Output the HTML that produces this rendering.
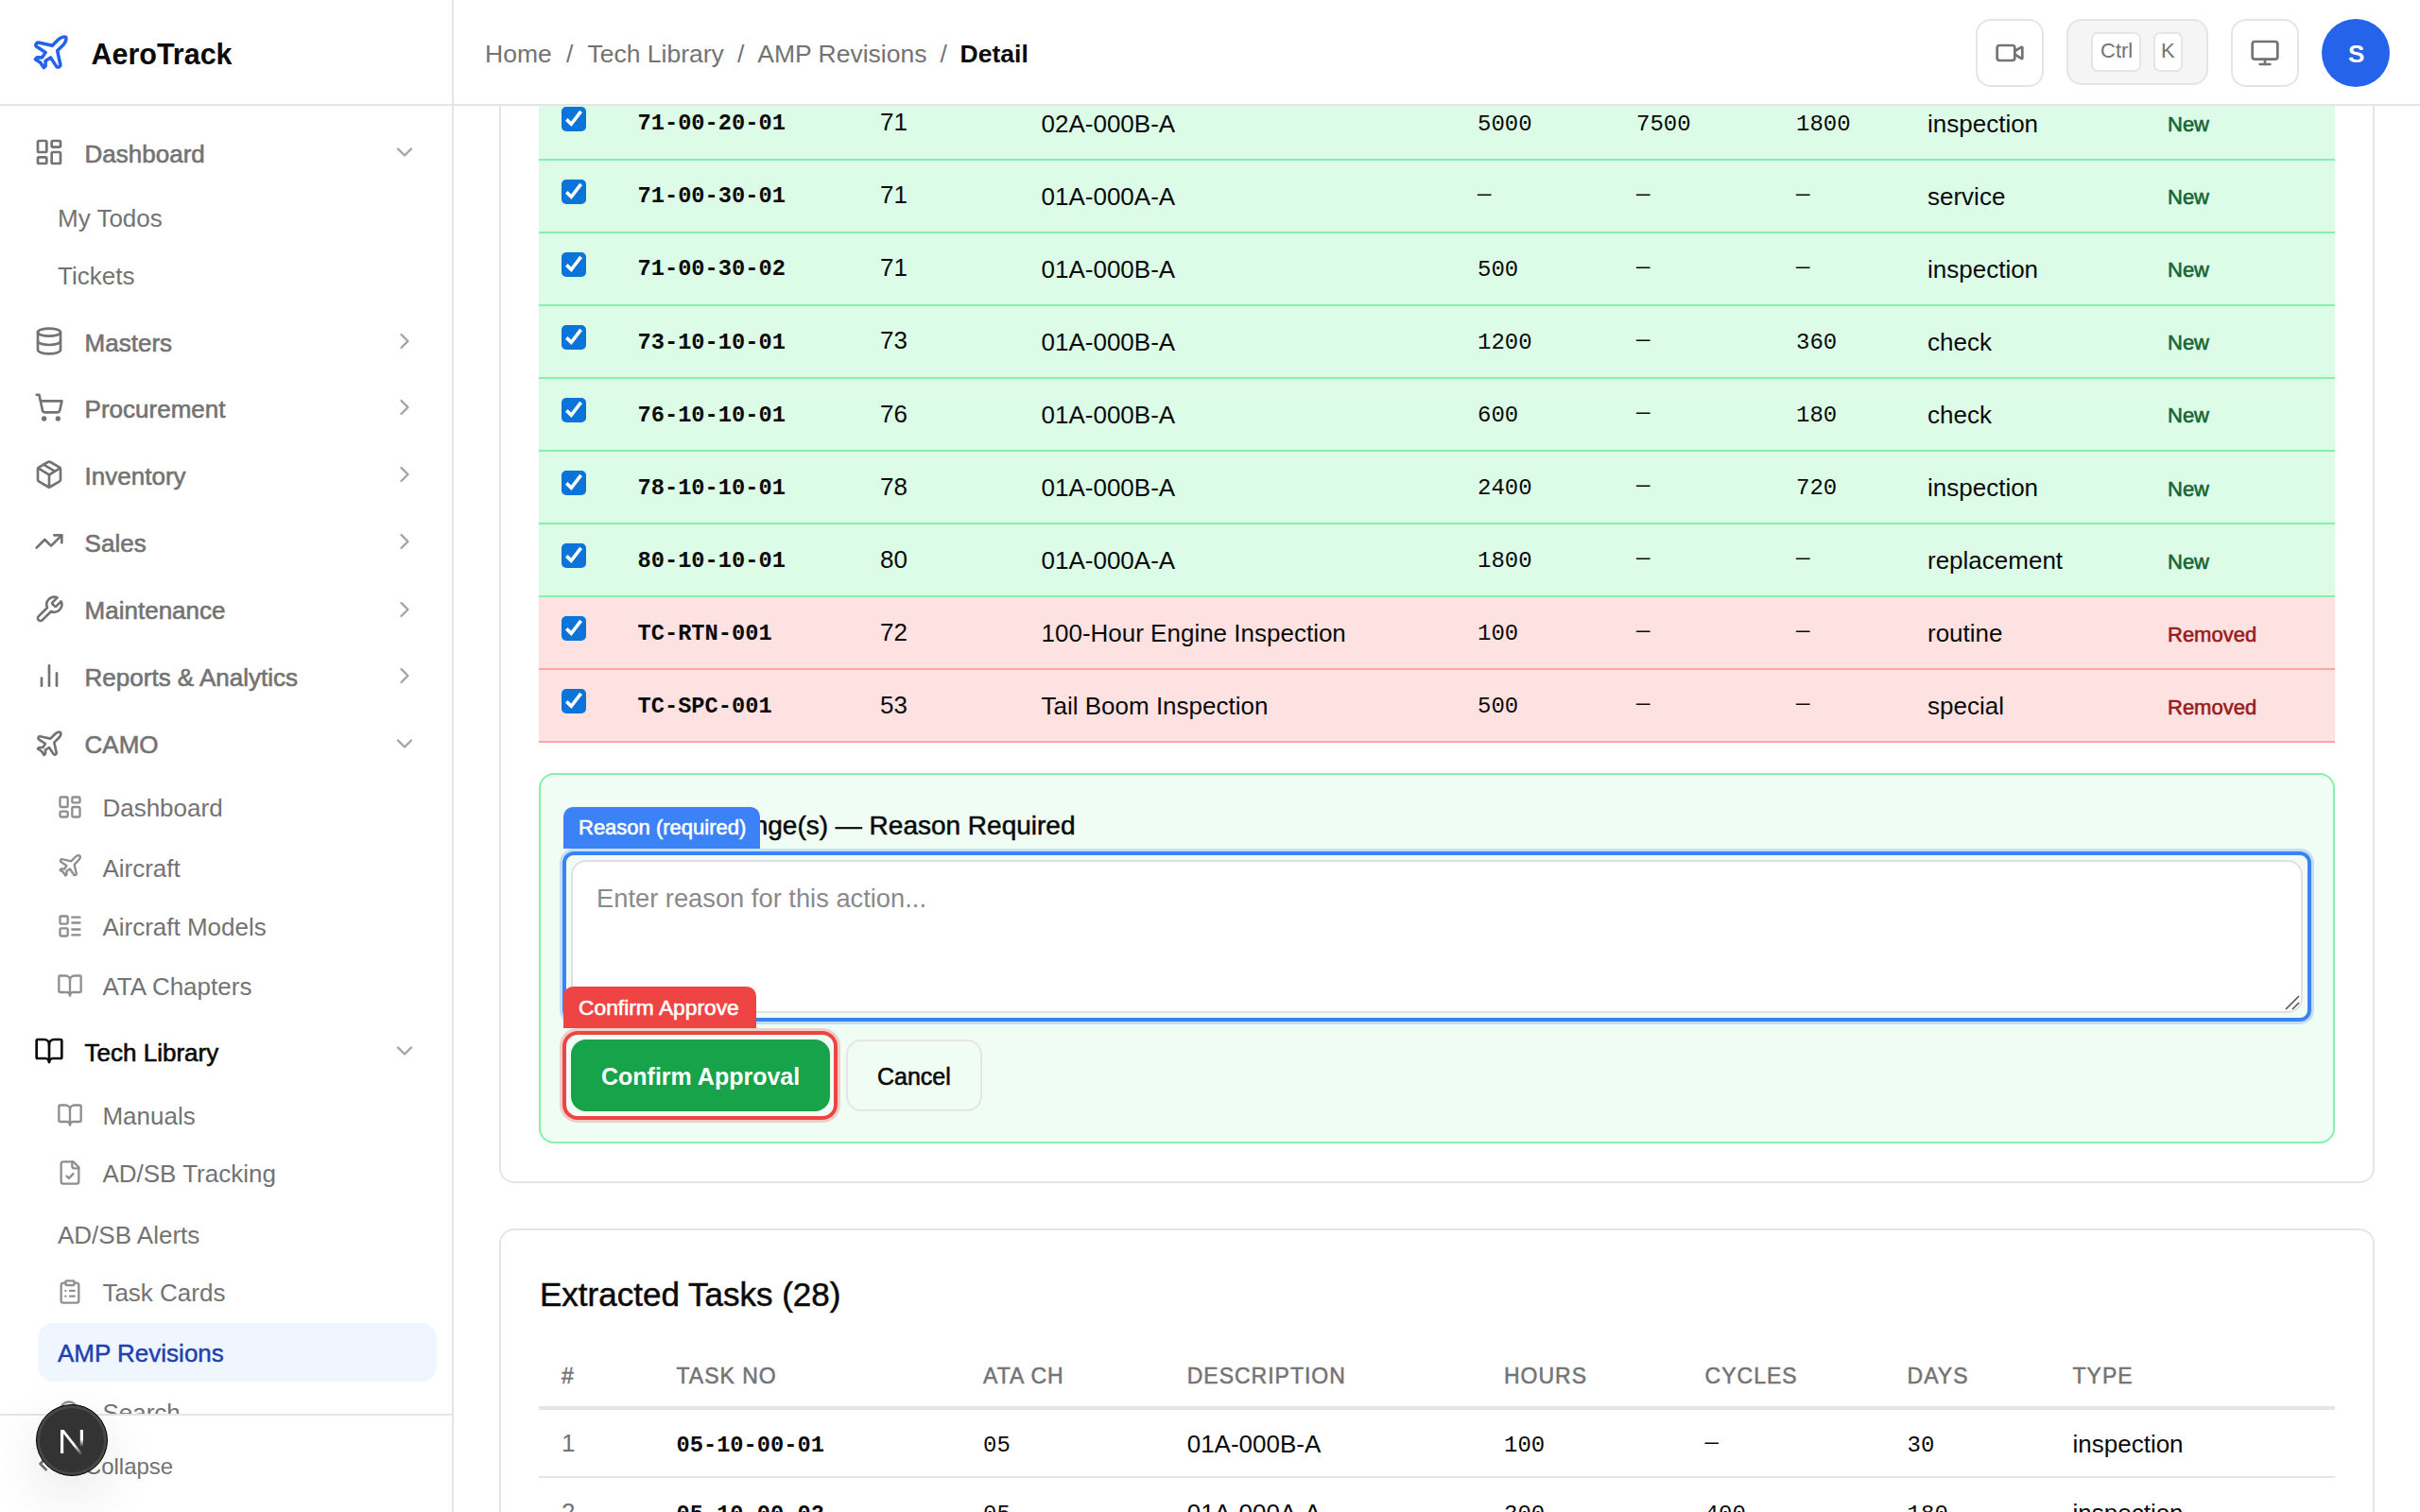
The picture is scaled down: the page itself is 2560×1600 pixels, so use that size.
<!DOCTYPE html>
<html><head><meta charset="utf-8"><title>AeroTrack</title>
<style>
html,body{margin:0;padding:0;}
body{width:2560px;height:1600px;overflow:hidden;position:relative;background:#fff;font-family:"Liberation Sans",sans-serif;}
.t{position:absolute;white-space:nowrap;line-height:1;}
.ic{position:absolute;}
.abs{position:absolute;box-sizing:border-box;}
@media (max-width:1400px){html{zoom:0.5;}}
</style></head><body>

<div class="abs" style="left:528px;top:-200px;width:1984px;height:1452px;border:2px solid #e5e5e5;border-radius:16px;background:#fff"></div>
<div class="abs" style="left:570px;top:92.7px;width:1900px;height:77.1px;background:#dcfce7;border-bottom:2px solid #86efac"></div>
<div class="abs" style="left:594px;top:112.7px;width:26px;height:26px;background:#0b74d8;border-radius:5px"></div>
<svg class="ic" style="left:594px;top:112.7px" width="26" height="26" viewBox="0 0 26 26"><polyline points="5.3,13.4 10.3,18.3 20.6,4.9" fill="none" stroke="#fff" stroke-width="3.6"/></svg>
<div class="t" style="left:674.5px;top:119.2px;font-size:23.7px;color:#0a0a0a;font-weight:700;font-family:'Liberation Mono', monospace;">71-00-20-01</div>
<div class="t" style="left:931.0px;top:116.1px;font-size:26px;color:#0a0a0a;font-weight:400;font-family:'Liberation Sans', sans-serif;">71</div>
<div class="t" style="left:1101.5px;top:117.6px;font-size:26px;color:#0a0a0a;font-weight:400;font-family:'Liberation Sans', sans-serif;">02A-000B-A</div>
<div class="t" style="left:1563.0px;top:119.7px;font-size:24px;color:#0a0a0a;font-weight:400;font-family:'Liberation Mono', monospace;">5000</div>
<div class="t" style="left:1731.0px;top:119.7px;font-size:24px;color:#0a0a0a;font-weight:400;font-family:'Liberation Mono', monospace;">7500</div>
<div class="t" style="left:1900.0px;top:119.7px;font-size:24px;color:#0a0a0a;font-weight:400;font-family:'Liberation Mono', monospace;">1800</div>
<div class="t" style="left:2039.0px;top:117.6px;font-size:26px;color:#0a0a0a;font-weight:400;font-family:'Liberation Sans', sans-serif;">inspection</div>
<div class="t" style="left:2293.0px;top:121.0px;font-size:22px;color:#166534;font-weight:400;font-family:'Liberation Sans', sans-serif;-webkit-text-stroke:0.6px #166534">New</div>
<div class="abs" style="left:570px;top:169.8px;width:1900px;height:77.1px;background:#dcfce7;border-bottom:2px solid #86efac"></div>
<div class="abs" style="left:594px;top:189.8px;width:26px;height:26px;background:#0b74d8;border-radius:5px"></div>
<svg class="ic" style="left:594px;top:189.8px" width="26" height="26" viewBox="0 0 26 26"><polyline points="5.3,13.4 10.3,18.3 20.6,4.9" fill="none" stroke="#fff" stroke-width="3.6"/></svg>
<div class="t" style="left:674.5px;top:196.3px;font-size:23.7px;color:#0a0a0a;font-weight:700;font-family:'Liberation Mono', monospace;">71-00-30-01</div>
<div class="t" style="left:931.0px;top:193.2px;font-size:26px;color:#0a0a0a;font-weight:400;font-family:'Liberation Sans', sans-serif;">71</div>
<div class="t" style="left:1101.5px;top:194.7px;font-size:26px;color:#0a0a0a;font-weight:400;font-family:'Liberation Sans', sans-serif;">01A-000A-A</div>
<div class="t" style="left:1563.0px;top:196.8px;font-size:24px;color:#0a0a0a;font-weight:400;font-family:'Liberation Mono', monospace;"><span style="position:relative;top:-3px">—</span></div>
<div class="t" style="left:1731.0px;top:196.8px;font-size:24px;color:#0a0a0a;font-weight:400;font-family:'Liberation Mono', monospace;"><span style="position:relative;top:-3px">—</span></div>
<div class="t" style="left:1900.0px;top:196.8px;font-size:24px;color:#0a0a0a;font-weight:400;font-family:'Liberation Mono', monospace;"><span style="position:relative;top:-3px">—</span></div>
<div class="t" style="left:2039.0px;top:194.7px;font-size:26px;color:#0a0a0a;font-weight:400;font-family:'Liberation Sans', sans-serif;">service</div>
<div class="t" style="left:2293.0px;top:198.1px;font-size:22px;color:#166534;font-weight:400;font-family:'Liberation Sans', sans-serif;-webkit-text-stroke:0.6px #166534">New</div>
<div class="abs" style="left:570px;top:246.9px;width:1900px;height:77.1px;background:#dcfce7;border-bottom:2px solid #86efac"></div>
<div class="abs" style="left:594px;top:266.9px;width:26px;height:26px;background:#0b74d8;border-radius:5px"></div>
<svg class="ic" style="left:594px;top:266.9px" width="26" height="26" viewBox="0 0 26 26"><polyline points="5.3,13.4 10.3,18.3 20.6,4.9" fill="none" stroke="#fff" stroke-width="3.6"/></svg>
<div class="t" style="left:674.5px;top:273.4px;font-size:23.7px;color:#0a0a0a;font-weight:700;font-family:'Liberation Mono', monospace;">71-00-30-02</div>
<div class="t" style="left:931.0px;top:270.3px;font-size:26px;color:#0a0a0a;font-weight:400;font-family:'Liberation Sans', sans-serif;">71</div>
<div class="t" style="left:1101.5px;top:271.8px;font-size:26px;color:#0a0a0a;font-weight:400;font-family:'Liberation Sans', sans-serif;">01A-000B-A</div>
<div class="t" style="left:1563.0px;top:273.8px;font-size:24px;color:#0a0a0a;font-weight:400;font-family:'Liberation Mono', monospace;">500</div>
<div class="t" style="left:1731.0px;top:273.8px;font-size:24px;color:#0a0a0a;font-weight:400;font-family:'Liberation Mono', monospace;"><span style="position:relative;top:-3px">—</span></div>
<div class="t" style="left:1900.0px;top:273.8px;font-size:24px;color:#0a0a0a;font-weight:400;font-family:'Liberation Mono', monospace;"><span style="position:relative;top:-3px">—</span></div>
<div class="t" style="left:2039.0px;top:271.8px;font-size:26px;color:#0a0a0a;font-weight:400;font-family:'Liberation Sans', sans-serif;">inspection</div>
<div class="t" style="left:2293.0px;top:275.2px;font-size:22px;color:#166534;font-weight:400;font-family:'Liberation Sans', sans-serif;-webkit-text-stroke:0.6px #166534">New</div>
<div class="abs" style="left:570px;top:324.0px;width:1900px;height:77.1px;background:#dcfce7;border-bottom:2px solid #86efac"></div>
<div class="abs" style="left:594px;top:344.0px;width:26px;height:26px;background:#0b74d8;border-radius:5px"></div>
<svg class="ic" style="left:594px;top:344.0px" width="26" height="26" viewBox="0 0 26 26"><polyline points="5.3,13.4 10.3,18.3 20.6,4.9" fill="none" stroke="#fff" stroke-width="3.6"/></svg>
<div class="t" style="left:674.5px;top:350.5px;font-size:23.7px;color:#0a0a0a;font-weight:700;font-family:'Liberation Mono', monospace;">73-10-10-01</div>
<div class="t" style="left:931.0px;top:347.4px;font-size:26px;color:#0a0a0a;font-weight:400;font-family:'Liberation Sans', sans-serif;">73</div>
<div class="t" style="left:1101.5px;top:348.9px;font-size:26px;color:#0a0a0a;font-weight:400;font-family:'Liberation Sans', sans-serif;">01A-000B-A</div>
<div class="t" style="left:1563.0px;top:350.9px;font-size:24px;color:#0a0a0a;font-weight:400;font-family:'Liberation Mono', monospace;">1200</div>
<div class="t" style="left:1731.0px;top:350.9px;font-size:24px;color:#0a0a0a;font-weight:400;font-family:'Liberation Mono', monospace;"><span style="position:relative;top:-3px">—</span></div>
<div class="t" style="left:1900.0px;top:350.9px;font-size:24px;color:#0a0a0a;font-weight:400;font-family:'Liberation Mono', monospace;">360</div>
<div class="t" style="left:2039.0px;top:348.9px;font-size:26px;color:#0a0a0a;font-weight:400;font-family:'Liberation Sans', sans-serif;">check</div>
<div class="t" style="left:2293.0px;top:352.3px;font-size:22px;color:#166534;font-weight:400;font-family:'Liberation Sans', sans-serif;-webkit-text-stroke:0.6px #166534">New</div>
<div class="abs" style="left:570px;top:401.1px;width:1900px;height:77.1px;background:#dcfce7;border-bottom:2px solid #86efac"></div>
<div class="abs" style="left:594px;top:421.1px;width:26px;height:26px;background:#0b74d8;border-radius:5px"></div>
<svg class="ic" style="left:594px;top:421.1px" width="26" height="26" viewBox="0 0 26 26"><polyline points="5.3,13.4 10.3,18.3 20.6,4.9" fill="none" stroke="#fff" stroke-width="3.6"/></svg>
<div class="t" style="left:674.5px;top:427.6px;font-size:23.7px;color:#0a0a0a;font-weight:700;font-family:'Liberation Mono', monospace;">76-10-10-01</div>
<div class="t" style="left:931.0px;top:424.5px;font-size:26px;color:#0a0a0a;font-weight:400;font-family:'Liberation Sans', sans-serif;">76</div>
<div class="t" style="left:1101.5px;top:426.0px;font-size:26px;color:#0a0a0a;font-weight:400;font-family:'Liberation Sans', sans-serif;">01A-000B-A</div>
<div class="t" style="left:1563.0px;top:428.0px;font-size:24px;color:#0a0a0a;font-weight:400;font-family:'Liberation Mono', monospace;">600</div>
<div class="t" style="left:1731.0px;top:428.0px;font-size:24px;color:#0a0a0a;font-weight:400;font-family:'Liberation Mono', monospace;"><span style="position:relative;top:-3px">—</span></div>
<div class="t" style="left:1900.0px;top:428.0px;font-size:24px;color:#0a0a0a;font-weight:400;font-family:'Liberation Mono', monospace;">180</div>
<div class="t" style="left:2039.0px;top:426.0px;font-size:26px;color:#0a0a0a;font-weight:400;font-family:'Liberation Sans', sans-serif;">check</div>
<div class="t" style="left:2293.0px;top:429.4px;font-size:22px;color:#166534;font-weight:400;font-family:'Liberation Sans', sans-serif;-webkit-text-stroke:0.6px #166534">New</div>
<div class="abs" style="left:570px;top:478.2px;width:1900px;height:77.1px;background:#dcfce7;border-bottom:2px solid #86efac"></div>
<div class="abs" style="left:594px;top:498.2px;width:26px;height:26px;background:#0b74d8;border-radius:5px"></div>
<svg class="ic" style="left:594px;top:498.2px" width="26" height="26" viewBox="0 0 26 26"><polyline points="5.3,13.4 10.3,18.3 20.6,4.9" fill="none" stroke="#fff" stroke-width="3.6"/></svg>
<div class="t" style="left:674.5px;top:504.6px;font-size:23.7px;color:#0a0a0a;font-weight:700;font-family:'Liberation Mono', monospace;">78-10-10-01</div>
<div class="t" style="left:931.0px;top:501.6px;font-size:26px;color:#0a0a0a;font-weight:400;font-family:'Liberation Sans', sans-serif;">78</div>
<div class="t" style="left:1101.5px;top:503.1px;font-size:26px;color:#0a0a0a;font-weight:400;font-family:'Liberation Sans', sans-serif;">01A-000B-A</div>
<div class="t" style="left:1563.0px;top:505.1px;font-size:24px;color:#0a0a0a;font-weight:400;font-family:'Liberation Mono', monospace;">2400</div>
<div class="t" style="left:1731.0px;top:505.1px;font-size:24px;color:#0a0a0a;font-weight:400;font-family:'Liberation Mono', monospace;"><span style="position:relative;top:-3px">—</span></div>
<div class="t" style="left:1900.0px;top:505.1px;font-size:24px;color:#0a0a0a;font-weight:400;font-family:'Liberation Mono', monospace;">720</div>
<div class="t" style="left:2039.0px;top:503.1px;font-size:26px;color:#0a0a0a;font-weight:400;font-family:'Liberation Sans', sans-serif;">inspection</div>
<div class="t" style="left:2293.0px;top:506.5px;font-size:22px;color:#166534;font-weight:400;font-family:'Liberation Sans', sans-serif;-webkit-text-stroke:0.6px #166534">New</div>
<div class="abs" style="left:570px;top:555.2px;width:1900px;height:77.1px;background:#dcfce7;border-bottom:2px solid #86efac"></div>
<div class="abs" style="left:594px;top:575.2px;width:26px;height:26px;background:#0b74d8;border-radius:5px"></div>
<svg class="ic" style="left:594px;top:575.2px" width="26" height="26" viewBox="0 0 26 26"><polyline points="5.3,13.4 10.3,18.3 20.6,4.9" fill="none" stroke="#fff" stroke-width="3.6"/></svg>
<div class="t" style="left:674.5px;top:581.7px;font-size:23.7px;color:#0a0a0a;font-weight:700;font-family:'Liberation Mono', monospace;">80-10-10-01</div>
<div class="t" style="left:931.0px;top:578.6px;font-size:26px;color:#0a0a0a;font-weight:400;font-family:'Liberation Sans', sans-serif;">80</div>
<div class="t" style="left:1101.5px;top:580.1px;font-size:26px;color:#0a0a0a;font-weight:400;font-family:'Liberation Sans', sans-serif;">01A-000A-A</div>
<div class="t" style="left:1563.0px;top:582.2px;font-size:24px;color:#0a0a0a;font-weight:400;font-family:'Liberation Mono', monospace;">1800</div>
<div class="t" style="left:1731.0px;top:582.2px;font-size:24px;color:#0a0a0a;font-weight:400;font-family:'Liberation Mono', monospace;"><span style="position:relative;top:-3px">—</span></div>
<div class="t" style="left:1900.0px;top:582.2px;font-size:24px;color:#0a0a0a;font-weight:400;font-family:'Liberation Mono', monospace;"><span style="position:relative;top:-3px">—</span></div>
<div class="t" style="left:2039.0px;top:580.1px;font-size:26px;color:#0a0a0a;font-weight:400;font-family:'Liberation Sans', sans-serif;">replacement</div>
<div class="t" style="left:2293.0px;top:583.5px;font-size:22px;color:#166534;font-weight:400;font-family:'Liberation Sans', sans-serif;-webkit-text-stroke:0.6px #166534">New</div>
<div class="abs" style="left:570px;top:632.3px;width:1900px;height:77.1px;background:#fee2e2;border-bottom:2px solid #fca5a5"></div>
<div class="abs" style="left:594px;top:652.3px;width:26px;height:26px;background:#0b74d8;border-radius:5px"></div>
<svg class="ic" style="left:594px;top:652.3px" width="26" height="26" viewBox="0 0 26 26"><polyline points="5.3,13.4 10.3,18.3 20.6,4.9" fill="none" stroke="#fff" stroke-width="3.6"/></svg>
<div class="t" style="left:674.5px;top:658.8px;font-size:23.7px;color:#0a0a0a;font-weight:700;font-family:'Liberation Mono', monospace;">TC-RTN-001</div>
<div class="t" style="left:931.0px;top:655.7px;font-size:26px;color:#0a0a0a;font-weight:400;font-family:'Liberation Sans', sans-serif;">72</div>
<div class="t" style="left:1101.5px;top:657.2px;font-size:26px;color:#0a0a0a;font-weight:400;font-family:'Liberation Sans', sans-serif;">100-Hour Engine Inspection</div>
<div class="t" style="left:1563.0px;top:659.3px;font-size:24px;color:#0a0a0a;font-weight:400;font-family:'Liberation Mono', monospace;">100</div>
<div class="t" style="left:1731.0px;top:659.3px;font-size:24px;color:#0a0a0a;font-weight:400;font-family:'Liberation Mono', monospace;"><span style="position:relative;top:-3px">—</span></div>
<div class="t" style="left:1900.0px;top:659.3px;font-size:24px;color:#0a0a0a;font-weight:400;font-family:'Liberation Mono', monospace;"><span style="position:relative;top:-3px">—</span></div>
<div class="t" style="left:2039.0px;top:657.2px;font-size:26px;color:#0a0a0a;font-weight:400;font-family:'Liberation Sans', sans-serif;">routine</div>
<div class="t" style="left:2293.0px;top:660.6px;font-size:22px;color:#991b1b;font-weight:400;font-family:'Liberation Sans', sans-serif;-webkit-text-stroke:0.6px #991b1b">Removed</div>
<div class="abs" style="left:570px;top:709.4px;width:1900px;height:77.1px;background:#fee2e2;border-bottom:2px solid #fca5a5"></div>
<div class="abs" style="left:594px;top:729.4px;width:26px;height:26px;background:#0b74d8;border-radius:5px"></div>
<svg class="ic" style="left:594px;top:729.4px" width="26" height="26" viewBox="0 0 26 26"><polyline points="5.3,13.4 10.3,18.3 20.6,4.9" fill="none" stroke="#fff" stroke-width="3.6"/></svg>
<div class="t" style="left:674.5px;top:735.9px;font-size:23.7px;color:#0a0a0a;font-weight:700;font-family:'Liberation Mono', monospace;">TC-SPC-001</div>
<div class="t" style="left:931.0px;top:732.8px;font-size:26px;color:#0a0a0a;font-weight:400;font-family:'Liberation Sans', sans-serif;">53</div>
<div class="t" style="left:1101.5px;top:734.3px;font-size:26px;color:#0a0a0a;font-weight:400;font-family:'Liberation Sans', sans-serif;">Tail Boom Inspection</div>
<div class="t" style="left:1563.0px;top:736.4px;font-size:24px;color:#0a0a0a;font-weight:400;font-family:'Liberation Mono', monospace;">500</div>
<div class="t" style="left:1731.0px;top:736.4px;font-size:24px;color:#0a0a0a;font-weight:400;font-family:'Liberation Mono', monospace;"><span style="position:relative;top:-3px">—</span></div>
<div class="t" style="left:1900.0px;top:736.4px;font-size:24px;color:#0a0a0a;font-weight:400;font-family:'Liberation Mono', monospace;"><span style="position:relative;top:-3px">—</span></div>
<div class="t" style="left:2039.0px;top:734.3px;font-size:26px;color:#0a0a0a;font-weight:400;font-family:'Liberation Sans', sans-serif;">special</div>
<div class="t" style="left:2293.0px;top:737.7px;font-size:22px;color:#991b1b;font-weight:400;font-family:'Liberation Sans', sans-serif;-webkit-text-stroke:0.6px #991b1b">Removed</div>
<div class="abs" style="left:570px;top:818px;width:1900px;height:392px;background:#f0fdf4;border:2px solid #86efac;border-radius:16px"></div>
<div class="t" style="right:1422.5px;top:859.5px;font-size:28px;color:#0a0a0a;-webkit-text-stroke:0.5px #0a0a0a">Approve 9 Change(s) — Reason Required</div>
<div class="abs" style="left:595px;top:901px;width:1850px;height:180px;border:4px solid #3b82f6;border-radius:12px;box-shadow:0 0 0 3px rgba(59,130,246,0.25)"></div>
<div class="abs" style="left:604px;top:910px;width:1832px;height:162px;border:2px solid #e0e0e0;border-radius:16px;background:#fff"></div>
<div class="t" style="left:631.0px;top:936.5px;font-size:27.3px;color:#8a8a8a;font-weight:400;font-family:'Liberation Sans', sans-serif;">Enter reason for this action...</div>
<svg class="ic" style="left:2415px;top:1050px" width="20" height="20" viewBox="0 0 20 20"><path d="M3 18 L17 4 M10 18 L17 11" stroke="#555" stroke-width="1.6"/></svg>
<div class="abs" style="left:596px;top:854px;width:208px;height:44px;background:#3b82f6;border-radius:10px 10px 0 0"></div>
<div class="t" style="left:612.0px;top:865.3px;font-size:22px;color:#fff;font-weight:400;font-family:'Liberation Sans', sans-serif;-webkit-text-stroke:0.6px #fff">Reason (required)</div>
<div class="abs" style="left:595px;top:1091px;width:291px;height:94px;border:4px solid #ef4444;border-radius:16px;box-shadow:0 0 0 3px rgba(239,68,68,0.25)"></div>
<div class="abs" style="left:604px;top:1100px;width:274px;height:76px;background:#16a34a;border-radius:16px"></div>
<div class="t" style="left:636.0px;top:1126.8px;font-size:25px;color:#fff;font-weight:700;font-family:'Liberation Sans', sans-serif;">Confirm Approval</div>
<div class="abs" style="left:596px;top:1044px;width:204px;height:44px;background:#ef4444;border-radius:10px 10px 0 0"></div>
<div class="t" style="left:612.0px;top:1054.6px;font-size:22.8px;color:#fff;font-weight:400;font-family:'Liberation Sans', sans-serif;-webkit-text-stroke:0.6px #fff">Confirm Approve</div>
<div class="abs" style="left:895px;top:1100px;width:144px;height:76px;border:2px solid #e5e5e5;border-radius:16px"></div>
<div class="t" style="left:928.0px;top:1126.8px;font-size:25px;color:#0a0a0a;font-weight:400;font-family:'Liberation Sans', sans-serif;-webkit-text-stroke:0.6px #0a0a0a">Cancel</div>
<div class="abs" style="left:528px;top:1300px;width:1984px;height:500px;border:2px solid #e5e5e5;border-radius:16px;background:#fff"></div>
<div class="t" style="left:571.0px;top:1352.2px;font-size:35px;color:#0a0a0a;font-weight:400;font-family:'Liberation Sans', sans-serif;-webkit-text-stroke:0.5px #0a0a0a">Extracted Tasks (28)</div>
<div class="t" style="left:594.0px;top:1444.5px;font-size:23px;color:#737373;font-weight:400;font-family:'Liberation Sans', sans-serif;letter-spacing:1px;-webkit-text-stroke:0.5px #737373">#</div>
<div class="t" style="left:715.5px;top:1444.5px;font-size:23px;color:#737373;font-weight:400;font-family:'Liberation Sans', sans-serif;letter-spacing:1px;-webkit-text-stroke:0.5px #737373">TASK NO</div>
<div class="t" style="left:1040.0px;top:1444.5px;font-size:23px;color:#737373;font-weight:400;font-family:'Liberation Sans', sans-serif;letter-spacing:1px;-webkit-text-stroke:0.5px #737373">ATA CH</div>
<div class="t" style="left:1255.7px;top:1444.5px;font-size:23px;color:#737373;font-weight:400;font-family:'Liberation Sans', sans-serif;letter-spacing:1px;-webkit-text-stroke:0.5px #737373">DESCRIPTION</div>
<div class="t" style="left:1591.0px;top:1444.5px;font-size:23px;color:#737373;font-weight:400;font-family:'Liberation Sans', sans-serif;letter-spacing:1px;-webkit-text-stroke:0.5px #737373">HOURS</div>
<div class="t" style="left:1803.6px;top:1444.5px;font-size:23px;color:#737373;font-weight:400;font-family:'Liberation Sans', sans-serif;letter-spacing:1px;-webkit-text-stroke:0.5px #737373">CYCLES</div>
<div class="t" style="left:2017.6px;top:1444.5px;font-size:23px;color:#737373;font-weight:400;font-family:'Liberation Sans', sans-serif;letter-spacing:1px;-webkit-text-stroke:0.5px #737373">DAYS</div>
<div class="t" style="left:2192.5px;top:1444.5px;font-size:23px;color:#737373;font-weight:400;font-family:'Liberation Sans', sans-serif;letter-spacing:1px;-webkit-text-stroke:0.5px #737373">TYPE</div>
<div class="abs" style="left:570px;top:1488px;width:1900px;height:4px;background:#e5e5e5"></div>
<div class="abs" style="left:570px;top:1562px;width:1900px;height:2px;background:#e5e5e5"></div>
<div class="t" style="left:594.0px;top:1513.9px;font-size:26px;color:#737373;font-weight:400;font-family:'Liberation Sans', sans-serif;">1</div>
<div class="t" style="left:715.5px;top:1518.0px;font-size:23.7px;color:#0a0a0a;font-weight:700;font-family:'Liberation Mono', monospace;">05-10-00-01</div>
<div class="t" style="left:1040.0px;top:1517.8px;font-size:24px;color:#0a0a0a;font-weight:400;font-family:'Liberation Mono', monospace;">05</div>
<div class="t" style="left:1255.7px;top:1515.4px;font-size:26px;color:#0a0a0a;font-weight:400;font-family:'Liberation Sans', sans-serif;">01A-000B-A</div>
<div class="t" style="left:1591.0px;top:1517.8px;font-size:24px;color:#0a0a0a;font-weight:400;font-family:'Liberation Mono', monospace;">100</div>
<div class="t" style="left:1803.6px;top:1517.8px;font-size:24px;color:#0a0a0a;font-weight:400;font-family:'Liberation Mono', monospace;"><span style="position:relative;top:-3px">—</span></div>
<div class="t" style="left:2017.6px;top:1517.8px;font-size:24px;color:#0a0a0a;font-weight:400;font-family:'Liberation Mono', monospace;">30</div>
<div class="t" style="left:2192.5px;top:1515.4px;font-size:26px;color:#0a0a0a;font-weight:400;font-family:'Liberation Sans', sans-serif;">inspection</div>
<div class="t" style="left:594.0px;top:1586.9px;font-size:26px;color:#737373;font-weight:400;font-family:'Liberation Sans', sans-serif;">2</div>
<div class="t" style="left:715.5px;top:1591.0px;font-size:23.7px;color:#0a0a0a;font-weight:700;font-family:'Liberation Mono', monospace;">05-10-00-02</div>
<div class="t" style="left:1040.0px;top:1590.8px;font-size:24px;color:#0a0a0a;font-weight:400;font-family:'Liberation Mono', monospace;">05</div>
<div class="t" style="left:1255.7px;top:1588.4px;font-size:26px;color:#0a0a0a;font-weight:400;font-family:'Liberation Sans', sans-serif;">01A-000A-A</div>
<div class="t" style="left:1591.0px;top:1590.8px;font-size:24px;color:#0a0a0a;font-weight:400;font-family:'Liberation Mono', monospace;">300</div>
<div class="t" style="left:1803.6px;top:1590.8px;font-size:24px;color:#0a0a0a;font-weight:400;font-family:'Liberation Mono', monospace;">400</div>
<div class="t" style="left:2017.6px;top:1590.8px;font-size:24px;color:#0a0a0a;font-weight:400;font-family:'Liberation Mono', monospace;">180</div>
<div class="t" style="left:2192.5px;top:1588.4px;font-size:26px;color:#0a0a0a;font-weight:400;font-family:'Liberation Sans', sans-serif;">inspection</div>
<div class="abs" style="left:480px;top:0;width:2080px;height:112px;background:#fff;border-bottom:2px solid #e5e5e5"></div>
<div class="t" style="left:513.0px;top:43.5px;font-size:26.5px;color:#737373;font-weight:400;font-family:'Liberation Sans', sans-serif;">Home</div>
<div class="t" style="left:599.0px;top:43.5px;font-size:26.5px;color:#737373;font-weight:400;font-family:'Liberation Sans', sans-serif;">/</div>
<div class="t" style="left:621.5px;top:43.5px;font-size:26.5px;color:#737373;font-weight:400;font-family:'Liberation Sans', sans-serif;">Tech Library</div>
<div class="t" style="left:780.0px;top:43.5px;font-size:26.5px;color:#737373;font-weight:400;font-family:'Liberation Sans', sans-serif;">/</div>
<div class="t" style="left:801.3px;top:43.5px;font-size:26.5px;color:#737373;font-weight:400;font-family:'Liberation Sans', sans-serif;">AMP Revisions</div>
<div class="t" style="left:994.4px;top:43.5px;font-size:26.5px;color:#737373;font-weight:400;font-family:'Liberation Sans', sans-serif;">/</div>
<div class="t" style="left:1015.6px;top:43.5px;font-size:26.5px;color:#0a0a0a;font-weight:700;font-family:'Liberation Sans', sans-serif;">Detail</div>
<div class="abs" style="left:2090px;top:20px;width:72px;height:72px;border:2px solid #e5e5e5;border-radius:16px;background:#fff"></div>
<svg class="ic" style="left:2110px;top:40px;" width="32" height="32" viewBox="0 0 24 24" fill="none" stroke="#737373" stroke-width="2" stroke-linecap="round" stroke-linejoin="round"><path d="m16 13 5.223 3.482a.5.5 0 0 0 .777-.416V7.87a.5.5 0 0 0-.752-.432L16 10.5"/><rect x="2" y="6" width="14" height="12" rx="2"/></svg>
<div class="abs" style="left:2186px;top:20px;width:150px;height:70px;border:2px solid #e5e5e5;border-radius:16px;background:#f5f5f5"></div>
<div class="abs" style="left:2212px;top:34px;width:53px;height:42px;border:2px solid #e5e5e5;border-radius:7px;background:#fff"></div>
<div class="abs" style="left:2278px;top:34px;width:31px;height:42px;border:2px solid #e5e5e5;border-radius:7px;background:#fff"></div>
<div class="t" style="left:2222.0px;top:43.3px;font-size:22px;color:#737373;font-weight:400;font-family:'Liberation Sans', sans-serif;">Ctrl</div>
<div class="t" style="left:2286.0px;top:43.3px;font-size:22px;color:#737373;font-weight:400;font-family:'Liberation Sans', sans-serif;">K</div>
<div class="abs" style="left:2360px;top:20px;width:72px;height:72px;border:2px solid #e5e5e5;border-radius:16px;background:#fff"></div>
<svg class="ic" style="left:2380px;top:40px;" width="32" height="32" viewBox="0 0 24 24" fill="none" stroke="#737373" stroke-width="2" stroke-linecap="round" stroke-linejoin="round"><rect width="20" height="14" x="2" y="3" rx="2"/><line x1="8" x2="16" y1="21" y2="21"/><line x1="12" x2="12" y1="17" y2="21"/></svg>
<div class="abs" style="left:2456px;top:20px;width:72px;height:72px;border-radius:50%;background:#2563eb"></div>
<div class="t" style="left:2484.0px;top:43.9px;font-size:26px;color:#fff;font-weight:700;font-family:'Liberation Sans', sans-serif;">S</div>
<div class="abs" style="left:0;top:0;width:480px;height:1600px;background:#fff;border-right:2px solid #e5e5e5"></div>
<div class="abs" style="left:0;top:110px;width:478px;height:2px;background:#e5e5e5"></div>
<svg class="ic" style="left:32px;top:34px;" width="43" height="43" viewBox="0 0 24 24" fill="none" stroke="#2563eb" stroke-width="2" stroke-linecap="round" stroke-linejoin="round"><path d="M17.8 19.2 16 11l3.5-3.5C21 6 21.5 4 21 3c-1-.5-3 0-4.5 1.5L13 8 4.8 6.2c-.5-.1-.9.1-1.1.5l-.3.5c-.2.5-.1 1 .3 1.3L9 12l-2 3H4l-1 1 3 2 2 3 1-1v-3l3-2 3.5 5.3c.3.4.8.5 1.3.3l.5-.2c.4-.3.6-.7.5-1.2z"/></svg>
<div class="t" style="left:96.4px;top:42.1px;font-size:30.5px;color:#0a0a0a;font-weight:700;font-family:'Liberation Sans', sans-serif;">AeroTrack</div>
<svg class="ic" style="left:36px;top:145px;" width="32" height="32" viewBox="0 0 24 24" fill="none" stroke="#737373" stroke-width="2" stroke-linecap="round" stroke-linejoin="round"><rect width="7" height="9" x="3" y="3" rx="1"/><rect width="7" height="5" x="14" y="3" rx="1"/><rect width="7" height="9" x="14" y="12" rx="1"/><rect width="7" height="5" x="3" y="16" rx="1"/></svg>
<div class="t" style="left:89.6px;top:149.9px;font-size:26px;color:#737373;font-weight:400;font-family:'Liberation Sans', sans-serif;-webkit-text-stroke:0.6px #737373">Dashboard</div>
<svg class="ic" style="left:414px;top:147px;" width="28" height="28" viewBox="0 0 24 24" fill="none" stroke="#a3a3a3" stroke-width="2" stroke-linecap="round" stroke-linejoin="round"><path d="m6 9 6 6 6-6"/></svg>
<div class="t" style="left:61.0px;top:217.9px;font-size:26px;color:#737373;font-weight:400;font-family:'Liberation Sans', sans-serif;">My Todos</div>
<div class="t" style="left:61.0px;top:279.4px;font-size:26px;color:#737373;font-weight:400;font-family:'Liberation Sans', sans-serif;">Tickets</div>
<svg class="ic" style="left:36px;top:345.2px;" width="32" height="32" viewBox="0 0 24 24" fill="none" stroke="#737373" stroke-width="2" stroke-linecap="round" stroke-linejoin="round"><ellipse cx="12" cy="5" rx="9" ry="3"/><path d="M3 5V19A9 3 0 0 0 21 19V5"/><path d="M3 12A9 3 0 0 0 21 12"/></svg>
<div class="t" style="left:89.6px;top:350.1px;font-size:26px;color:#737373;font-weight:400;font-family:'Liberation Sans', sans-serif;-webkit-text-stroke:0.6px #737373">Masters</div>
<svg class="ic" style="left:414px;top:347.2px;" width="28" height="28" viewBox="0 0 24 24" fill="none" stroke="#a3a3a3" stroke-width="2" stroke-linecap="round" stroke-linejoin="round"><path d="m9 18 6-6-6-6"/></svg>
<svg class="ic" style="left:36px;top:415.3px;" width="32" height="32" viewBox="0 0 24 24" fill="none" stroke="#737373" stroke-width="2" stroke-linecap="round" stroke-linejoin="round"><circle cx="8" cy="21" r="1"/><circle cx="19" cy="21" r="1"/><path d="M2.05 2.05h2l2.66 12.42a2 2 0 0 0 2 1.58h9.78a2 2 0 0 0 1.95-1.57l1.65-7.43H5.12"/></svg>
<div class="t" style="left:89.6px;top:420.2px;font-size:26px;color:#737373;font-weight:400;font-family:'Liberation Sans', sans-serif;-webkit-text-stroke:0.6px #737373">Procurement</div>
<svg class="ic" style="left:414px;top:417.3px;" width="28" height="28" viewBox="0 0 24 24" fill="none" stroke="#a3a3a3" stroke-width="2" stroke-linecap="round" stroke-linejoin="round"><path d="m9 18 6-6-6-6"/></svg>
<svg class="ic" style="left:36px;top:486.4px;" width="32" height="32" viewBox="0 0 24 24" fill="none" stroke="#737373" stroke-width="2" stroke-linecap="round" stroke-linejoin="round"><path d="M11 21.73a2 2 0 0 0 2 0l7-4A2 2 0 0 0 21 16V8a2 2 0 0 0-1-1.73l-7-4a2 2 0 0 0-2 0l-7 4A2 2 0 0 0 3 8v8a2 2 0 0 0 1 1.73z"/><path d="M12 22V12"/><path d="m3.3 7 7.703 4.734a2 2 0 0 0 1.994 0L20.7 7"/><path d="m7.5 4.27 9 5.15"/></svg>
<div class="t" style="left:89.6px;top:491.3px;font-size:26px;color:#737373;font-weight:400;font-family:'Liberation Sans', sans-serif;-webkit-text-stroke:0.6px #737373">Inventory</div>
<svg class="ic" style="left:414px;top:488.4px;" width="28" height="28" viewBox="0 0 24 24" fill="none" stroke="#a3a3a3" stroke-width="2" stroke-linecap="round" stroke-linejoin="round"><path d="m9 18 6-6-6-6"/></svg>
<svg class="ic" style="left:36px;top:556.8px;" width="32" height="32" viewBox="0 0 24 24" fill="none" stroke="#737373" stroke-width="2" stroke-linecap="round" stroke-linejoin="round"><polyline points="22 7 13.5 15.5 8.5 10.5 2 17"/><polyline points="16 7 22 7 22 13"/></svg>
<div class="t" style="left:89.6px;top:561.7px;font-size:26px;color:#737373;font-weight:400;font-family:'Liberation Sans', sans-serif;-webkit-text-stroke:0.6px #737373">Sales</div>
<svg class="ic" style="left:414px;top:558.8px;" width="28" height="28" viewBox="0 0 24 24" fill="none" stroke="#a3a3a3" stroke-width="2" stroke-linecap="round" stroke-linejoin="round"><path d="m9 18 6-6-6-6"/></svg>
<svg class="ic" style="left:36px;top:628.5px;" width="32" height="32" viewBox="0 0 24 24" fill="none" stroke="#737373" stroke-width="2" stroke-linecap="round" stroke-linejoin="round"><path d="M14.7 6.3a1 1 0 0 0 0 1.4l1.6 1.6a1 1 0 0 0 1.4 0l3.77-3.77a6 6 0 0 1-7.94 7.94l-6.91 6.91a2.12 2.12 0 0 1-3-3l6.91-6.91a6 6 0 0 1 7.94-7.94l-3.76 3.76z"/></svg>
<div class="t" style="left:89.6px;top:633.4px;font-size:26px;color:#737373;font-weight:400;font-family:'Liberation Sans', sans-serif;-webkit-text-stroke:0.6px #737373">Maintenance</div>
<svg class="ic" style="left:414px;top:630.5px;" width="28" height="28" viewBox="0 0 24 24" fill="none" stroke="#a3a3a3" stroke-width="2" stroke-linecap="round" stroke-linejoin="round"><path d="m9 18 6-6-6-6"/></svg>
<svg class="ic" style="left:36px;top:699px;" width="32" height="32" viewBox="0 0 24 24" fill="none" stroke="#737373" stroke-width="2" stroke-linecap="round" stroke-linejoin="round"><line x1="18" x2="18" y1="20" y2="10"/><line x1="12" x2="12" y1="20" y2="4"/><line x1="6" x2="6" y1="20" y2="14"/></svg>
<div class="t" style="left:89.6px;top:703.9px;font-size:26px;color:#737373;font-weight:400;font-family:'Liberation Sans', sans-serif;-webkit-text-stroke:0.6px #737373">Reports &amp; Analytics</div>
<svg class="ic" style="left:414px;top:701px;" width="28" height="28" viewBox="0 0 24 24" fill="none" stroke="#a3a3a3" stroke-width="2" stroke-linecap="round" stroke-linejoin="round"><path d="m9 18 6-6-6-6"/></svg>
<svg class="ic" style="left:36px;top:770.5px;" width="32" height="32" viewBox="0 0 24 24" fill="none" stroke="#737373" stroke-width="2" stroke-linecap="round" stroke-linejoin="round"><path d="M17.8 19.2 16 11l3.5-3.5C21 6 21.5 4 21 3c-1-.5-3 0-4.5 1.5L13 8 4.8 6.2c-.5-.1-.9.1-1.1.5l-.3.5c-.2.5-.1 1 .3 1.3L9 12l-2 3H4l-1 1 3 2 2 3 1-1v-3l3-2 3.5 5.3c.3.4.8.5 1.3.3l.5-.2c.4-.3.6-.7.5-1.2z"/></svg>
<div class="t" style="left:89.6px;top:775.4px;font-size:26px;color:#737373;font-weight:400;font-family:'Liberation Sans', sans-serif;-webkit-text-stroke:0.6px #737373">CAMO</div>
<svg class="ic" style="left:414px;top:772.5px;" width="28" height="28" viewBox="0 0 24 24" fill="none" stroke="#a3a3a3" stroke-width="2" stroke-linecap="round" stroke-linejoin="round"><path d="m6 9 6 6 6-6"/></svg>
<svg class="ic" style="left:60px;top:839.7px;" width="28" height="28" viewBox="0 0 24 24" fill="none" stroke="#8f8f8f" stroke-width="2" stroke-linecap="round" stroke-linejoin="round"><rect width="7" height="9" x="3" y="3" rx="1"/><rect width="7" height="5" x="14" y="3" rx="1"/><rect width="7" height="9" x="14" y="12" rx="1"/><rect width="7" height="5" x="3" y="16" rx="1"/></svg>
<div class="t" style="left:108.4px;top:841.9px;font-size:26px;color:#737373;font-weight:400;font-family:'Liberation Sans', sans-serif;">Dashboard</div>
<svg class="ic" style="left:60px;top:901.7px;" width="28" height="28" viewBox="0 0 24 24" fill="none" stroke="#8f8f8f" stroke-width="2" stroke-linecap="round" stroke-linejoin="round"><path d="M17.8 19.2 16 11l3.5-3.5C21 6 21.5 4 21 3c-1-.5-3 0-4.5 1.5L13 8 4.8 6.2c-.5-.1-.9.1-1.1.5l-.3.5c-.2.5-.1 1 .3 1.3L9 12l-2 3H4l-1 1 3 2 2 3 1-1v-3l3-2 3.5 5.3c.3.4.8.5 1.3.3l.5-.2c.4-.3.6-.7.5-1.2z"/></svg>
<div class="t" style="left:108.4px;top:905.9px;font-size:26px;color:#737373;font-weight:400;font-family:'Liberation Sans', sans-serif;">Aircraft</div>
<svg class="ic" style="left:60px;top:965.5px;" width="28" height="28" viewBox="0 0 24 24" fill="none" stroke="#8f8f8f" stroke-width="2" stroke-linecap="round" stroke-linejoin="round"><rect width="7" height="7" x="3" y="3" rx="1"/><rect width="7" height="7" x="3" y="14" rx="1"/><path d="M14 4h7"/><path d="M14 9h7"/><path d="M14 15h7"/><path d="M14 20h7"/></svg>
<div class="t" style="left:108.4px;top:967.7px;font-size:26px;color:#737373;font-weight:400;font-family:'Liberation Sans', sans-serif;">Aircraft Models</div>
<svg class="ic" style="left:60px;top:1029.2px;" width="28" height="28" viewBox="0 0 24 24" fill="none" stroke="#8f8f8f" stroke-width="2" stroke-linecap="round" stroke-linejoin="round"><path d="M12 7v14"/><path d="M3 18a1 1 0 0 1-1-1V4a1 1 0 0 1 1-1h5a4 4 0 0 1 4 4 4 4 0 0 1 4-4h5a1 1 0 0 1 1 1v13a1 1 0 0 1-1 1h-6a3 3 0 0 0-3 3 3 3 0 0 0-3-3z"/></svg>
<div class="t" style="left:108.4px;top:1031.4px;font-size:26px;color:#737373;font-weight:400;font-family:'Liberation Sans', sans-serif;">ATA Chapters</div>
<svg class="ic" style="left:36px;top:1095.8px;" width="32" height="32" viewBox="0 0 24 24" fill="none" stroke="#0a0a0a" stroke-width="2" stroke-linecap="round" stroke-linejoin="round"><path d="M12 7v14"/><path d="M3 18a1 1 0 0 1-1-1V4a1 1 0 0 1 1-1h5a4 4 0 0 1 4 4 4 4 0 0 1 4-4h5a1 1 0 0 1 1 1v13a1 1 0 0 1-1 1h-6a3 3 0 0 0-3 3 3 3 0 0 0-3-3z"/></svg>
<div class="t" style="left:89.6px;top:1100.7px;font-size:26px;color:#0a0a0a;font-weight:400;font-family:'Liberation Sans', sans-serif;-webkit-text-stroke:0.6px #0a0a0a">Tech Library</div>
<svg class="ic" style="left:414px;top:1097.8px;" width="28" height="28" viewBox="0 0 24 24" fill="none" stroke="#a3a3a3" stroke-width="2" stroke-linecap="round" stroke-linejoin="round"><path d="m6 9 6 6 6-6"/></svg>
<svg class="ic" style="left:60px;top:1165.5px;" width="28" height="28" viewBox="0 0 24 24" fill="none" stroke="#8f8f8f" stroke-width="2" stroke-linecap="round" stroke-linejoin="round"><path d="M12 7v14"/><path d="M3 18a1 1 0 0 1-1-1V4a1 1 0 0 1 1-1h5a4 4 0 0 1 4 4 4 4 0 0 1 4-4h5a1 1 0 0 1 1 1v13a1 1 0 0 1-1 1h-6a3 3 0 0 0-3 3 3 3 0 0 0-3-3z"/></svg>
<div class="t" style="left:108.4px;top:1167.7px;font-size:26px;color:#737373;font-weight:400;font-family:'Liberation Sans', sans-serif;">Manuals</div>
<svg class="ic" style="left:60px;top:1227.0px;" width="28" height="28" viewBox="0 0 24 24" fill="none" stroke="#8f8f8f" stroke-width="2" stroke-linecap="round" stroke-linejoin="round"><path d="M15 2H6a2 2 0 0 0-2 2v16a2 2 0 0 0 2 2h12a2 2 0 0 0 2-2V7Z"/><path d="M14 2v4a2 2 0 0 0 2 2h4"/><path d="m9 15 2 2 4-4"/></svg>
<div class="t" style="left:108.4px;top:1229.2px;font-size:26px;color:#737373;font-weight:400;font-family:'Liberation Sans', sans-serif;">AD/SB Tracking</div>
<div class="t" style="left:61.0px;top:1293.5px;font-size:26px;color:#737373;font-weight:400;font-family:'Liberation Sans', sans-serif;">AD/SB Alerts</div>
<svg class="ic" style="left:60px;top:1353.0px;" width="28" height="28" viewBox="0 0 24 24" fill="none" stroke="#8f8f8f" stroke-width="2" stroke-linecap="round" stroke-linejoin="round"><rect width="8" height="4" x="8" y="2" rx="1" ry="1"/><path d="M16 4h2a2 2 0 0 1 2 2v14a2 2 0 0 1-2 2H6a2 2 0 0 1-2-2V6a2 2 0 0 1 2-2h2"/><path d="M12 11h4"/><path d="M12 16h4"/><path d="M8 11h.01"/><path d="M8 16h.01"/></svg>
<div class="t" style="left:108.4px;top:1355.2px;font-size:26px;color:#737373;font-weight:400;font-family:'Liberation Sans', sans-serif;">Task Cards</div>
<div class="abs" style="left:40px;top:1400px;width:422px;height:62px;background:#eff6ff;border-radius:16px"></div>
<div class="t" style="left:61.0px;top:1419.2px;font-size:26px;color:#1e40af;font-weight:400;font-family:'Liberation Sans', sans-serif;-webkit-text-stroke:0.45px #1e40af">AMP Revisions</div>
<div class="abs" style="left:0;top:1470px;width:478px;height:26px;overflow:hidden">
<svg class="ic" style="left:60px;top:10.200000000000045px;" width="28" height="28" viewBox="0 0 24 24" fill="none" stroke="#8f8f8f" stroke-width="2" stroke-linecap="round" stroke-linejoin="round"><circle cx="11" cy="11" r="8"/><path d="m21 21-4.3-4.3"/></svg>
<div class="t" style="left:108.4px;top:12.4px;font-size:26px;color:#737373">Search</div>
</div>
<div class="abs" style="left:0;top:1496px;width:478px;height:2px;background:#e5e5e5"></div>
<svg class="ic" style="left:35px;top:1534px;" width="30" height="30" viewBox="0 0 24 24" fill="none" stroke="#737373" stroke-width="2" stroke-linecap="round" stroke-linejoin="round"><path d="m11 17-5-5 5-5"/><path d="m18 17-5-5 5-5"/></svg>
<div class="t" style="left:89.8px;top:1539.6px;font-size:24px;color:#737373;font-weight:400;font-family:'Liberation Sans', sans-serif;">Collapse</div>
<div class="abs" style="left:38px;top:1486px;width:76px;height:76px;border-radius:50%;background:#333;border:1.5px solid #000;box-shadow:0 20px 60px rgba(0,0,0,0.10), inset 0 0 0 3px rgba(255,255,255,0.10)"></div>
<svg class="ic" style="left:60px;top:1509px" width="32" height="32" viewBox="0 0 32 32"><defs><linearGradient id="ng" x1="0" y1="0" x2="0" y2="1"><stop offset="0.55" stop-color="#fff"/><stop offset="1" stop-color="#fff" stop-opacity="0"/></linearGradient><linearGradient id="ng2" x1="0" y1="0" x2="1" y2="1"><stop offset="0.6" stop-color="#fff"/><stop offset="1" stop-color="#fff" stop-opacity="0"/></linearGradient></defs><rect x="4" y="4" width="3.2" height="25" fill="#fff"/><path d="M4 4 L7.5 4 L28 30 L24.5 30 Z" fill="url(#ng2)"/><rect x="24.8" y="4" width="3.2" height="18" fill="url(#ng)"/></svg>
</body></html>
